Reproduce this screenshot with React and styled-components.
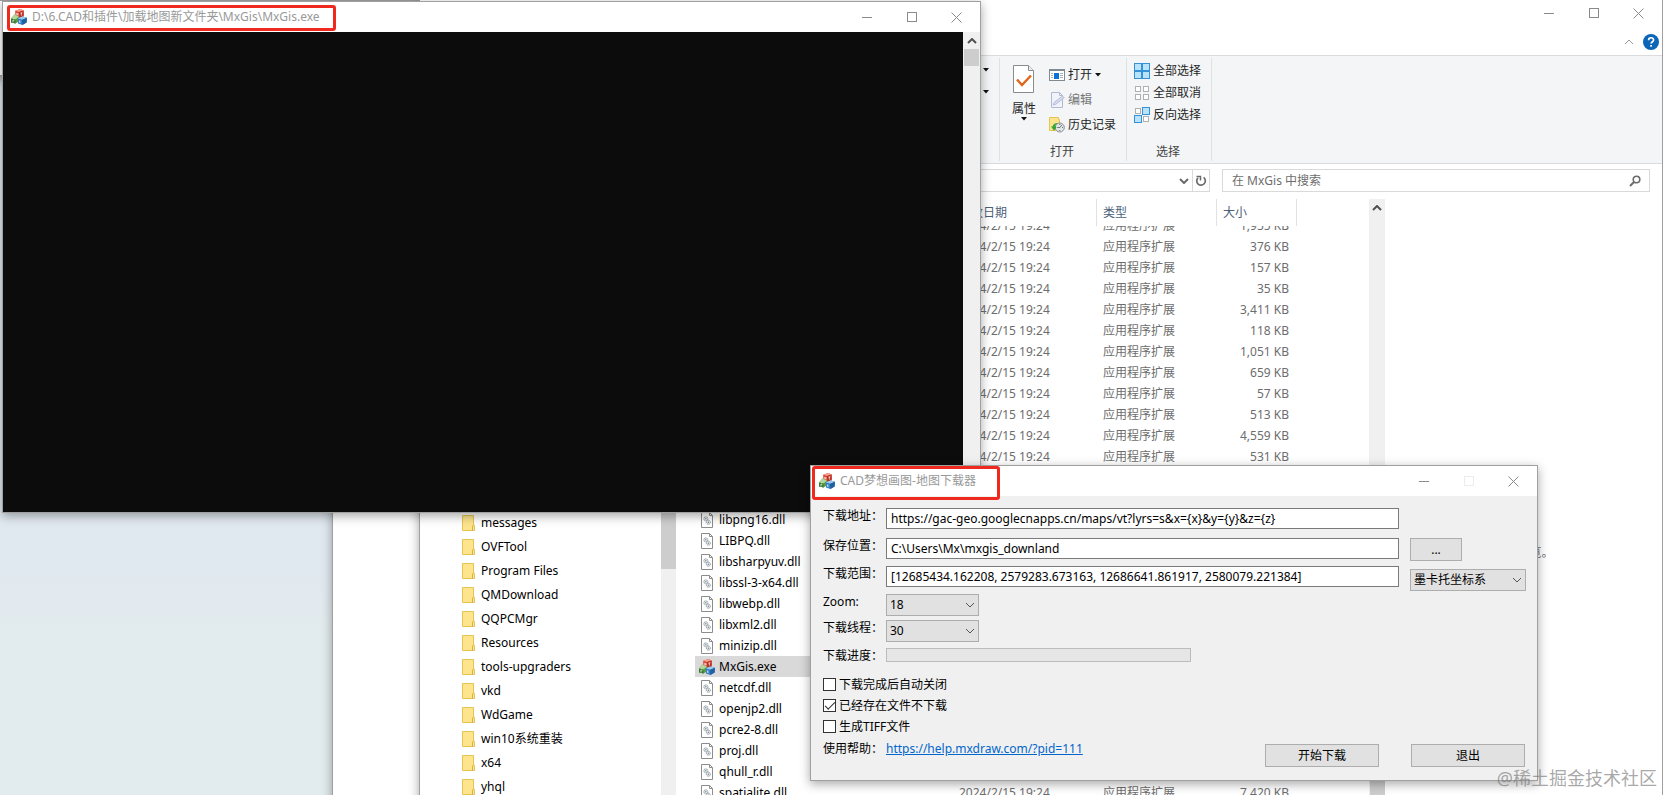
import styled, { createGlobalStyle } from 'styled-components';

const GlobalStyle = createGlobalStyle`
  * {
    box-sizing: border-box;
  }

  body {
    margin: 0;
    overflow: hidden;
  }

  body, button, input, select, table {
    font-family: 'Noto Sans', 'Noto Sans CJK SC', sans-serif;
    font-size: 12px;
    line-height: 16px;
    color: #000;
  }

  button {
    padding: 0;
    border: 0;
    background: none;
  }

  svg {
    display: block;
    flex: none;
  }
`;

const Desktop = styled.main`
  position: relative;
  width: 100vw;
  height: 100vh;
  overflow: hidden;
  background: linear-gradient(#e1e9f0 72%, #e2ebed 80%);
`;

/* windows */

const Window = styled.section`
  position: absolute;
  display: flex;
  flex-direction: column;
  background: #fff;
  border: 1px solid #a0a0a0;
  box-shadow: 0 3px 10px rgba(0, 0, 0, 0.35);
`;

const EdgeWindow = styled(Window)`
  left: -40px;
  top: 0;
  width: 372px;
  height: 76px;
`;

const BackWindow = styled(Window)`
  left: 332px;
  right: 0;
  top: 0;
  bottom: -40px;
`;

const ExplorerWindow = styled(Window)`
  left: 419px;
  right: 0;
  top: -1px;
  bottom: -112px;
`;

const ConsoleWindow = styled(Window)`
  left: 2px;
  top: 1px;
  width: 979px;
  height: 512px;
`;

const DialogWindow = styled(Window)`
  left: 810px;
  top: 465px;
  width: 728px;
`;

const TitleBar = styled.header`
  display: flex;
  align-items: center;
  justify-content: flex-end;
  height: ${({ $height }) => $height || 30}px;
  padding: 0 1px 0 8px;
  background: #fff;
`;

const TitleText = styled.h1`
  flex: 1;
  margin: 0 0 0 5px;
  font-size: 12px;
  font-weight: 400;
  color: #999;
  white-space: nowrap;
`;

const CaptionButton = styled.button`
  display: flex;
  align-items: center;
  justify-content: center;
  width: 45px;
  height: 26px;
  color: #8a8a8a;

  &:disabled {
    color: #ececec;
  }
`;

const Highlight = styled.div`
  position: absolute;
  left: ${({ $left }) => $left}px;
  top: ${({ $top }) => $top}px;
  width: ${({ $width }) => $width}px;
  height: ${({ $height }) => $height}px;
  border: 3px solid #f0291e;
  border-radius: 3px;
  pointer-events: none;
`;

/* scroll bars */

const ScrollBar = styled.div`
  display: flex;
  flex-direction: column;
  flex: none;
  align-items: center;
  width: ${({ $width }) => $width || 16}px;
  background: #f0f0f0;
`;

const ScrollArrow = styled.button`
  display: flex;
  align-items: center;
  justify-content: center;
  width: 100%;
  height: 17px;
  color: #505050;
`;

const ScrollThumb = styled.div`
  width: 15px;
  height: ${({ $height }) => $height}px;
  margin-top: ${({ $offset }) => $offset || 0}px;
  background: #cdcdcd;
`;

/* console */

const ConsoleBody = styled.div`
  display: flex;
  flex: 1;
`;

const ConsoleScreen = styled.div`
  flex: 1;
  background: #0c0c0c;
`;

/* explorer */

const TabRow = styled.div`
  display: flex;
  align-items: center;
  justify-content: flex-end;
  gap: 9px;
  height: 29px;
  padding: 3px 3px 0 0;
  color: #999;
`;

const Ribbon = styled.div`
  display: flex;
  height: 109px;
  padding: 2px 0;
  background: #f3f5f7;
  border-top: 1px solid #d9dbdd;
  border-bottom: 1px solid #d9dbdd;
`;

const RibbonGroup = styled.div`
  display: flex;
  flex-direction: column;
  justify-content: space-between;
  width: ${({ $width }) => $width}px;
  border-right: 1px solid #dfe1e3;
`;

const RibbonTools = styled.div`
  display: flex;
  gap: 11px;
  padding: ${({ $pad }) => $pad};
`;

const ToolColumn = styled.div`
  display: flex;
  flex-direction: column;
`;

const MenuArrows = styled(ToolColumn)`
  align-items: flex-end;
  gap: 18px;
  padding: 10px;
`;

const RibbonLabel = styled.div`
  height: 17px;
  padding-right: 2px;
  text-align: center;
  color: #444;
`;

const ToolButton = styled.button`
  display: flex;
  align-items: center;
  gap: 3px;
  height: ${({ $height }) => $height}px;
  color: #262626;
  white-space: nowrap;

  &:disabled {
    color: #777;
  }
`;

const TallButton = styled.button`
  display: flex;
  flex-direction: column;
  align-items: center;
  width: 24px;
  margin-right: 2px;
  padding-top: 3px;
  color: #262626;
  white-space: nowrap;

  span {
    margin-top: 8px;
  }
`;

const AddressRow = styled.div`
  display: flex;
  gap: 12px;
  padding: 5px 12px 7px 10px;
`;

const AddressBox = styled.div`
  display: flex;
  align-items: center;
  justify-content: flex-end;
  width: 780px;
  height: 23px;
  border: 1px solid #d9d9d9;
  color: #6b6b6b;

  button {
    display: flex;
    align-items: center;
    justify-content: center;
    width: 17px;
    height: 21px;
    color: inherit;
  }

  button + button {
    border-left: 1px solid #d9d9d9;
  }
`;

const SearchBox = styled.label`
  display: flex;
  flex: 1;
  align-items: center;
  height: 23px;
  padding: 0 8px 0 9px;
  border: 1px solid #d9d9d9;
  color: #6b6b6b;

  input {
    flex: 1;
    padding: 0;
    border: 0;
    outline: 0;
    background: none;
  }

  input::placeholder {
    color: #6d6d6d;
    opacity: 1;
  }
`;

const ExplorerBody = styled.div`
  display: flex;
  flex: 1;
  min-height: 0;
`;

const NavTree = styled.ul`
  width: 241px;
  margin: 0;
  padding: 312px 0 0 42px;
  list-style: none;
  overflow: hidden;
`;

const NavItem = styled.li`
  display: flex;
  align-items: center;
  gap: 6px;
  height: 24px;
  white-space: nowrap;
`;

const FileTable = styled.table`
  display: flex;
  flex-direction: column;
  width: 693px;
  padding-left: 19px;

  tr {
    display: grid;
    grid-template-columns: 258px 144px 120px 80px;
  }

  tbody {
    flex: 1;
    overflow: hidden;
  }

  tbody tr:first-child {
    margin-top: -11px;
  }
`;

const HeadCell = styled.th`
  height: 27px;
  padding: 6px 6px 5px;
  border-right: 1px solid #e2e2e2;
  font-weight: 400;
  text-align: left;
  color: #4c607a;

  &:first-child {
    border: 0;
  }
`;

const FileRow = styled.tr`
  height: 21px;
  background: ${({ $selected }) => ($selected ? '#d9d9d9' : 'none')};
`;

const NameCell = styled.td`
  display: flex;
  align-items: center;
  gap: 4px;
  padding: 0 0 0 4px;
`;

const DetailCell = styled.td`
  padding: 3px 8px 2px 6px;
  text-align: ${({ $right }) => ($right ? 'right' : 'left')};
  color: #6d6d6d;
  white-space: nowrap;
`;

const Preview = styled.div`
  display: flex;
  flex: 1;
  align-items: center;
  justify-content: center;
  color: #6d6d6d;
`;

/* download dialog */

const DialogBody = styled.form`
  padding: 12px 12px 13px;
  background: #f0f0f0;
`;

const Fields = styled.div`
  display: grid;
  grid-template-columns: 63px 1fr 115px;
  grid-template-rows: 30px 28px 28px 26px 28px 26px;
  align-items: start;
`;

const Label = styled.label`
  grid-column: 1;
  white-space: nowrap;
`;

const TextInput = styled.input`
  height: 21px;
  margin-right: 11px;
  padding: 0 4px;
  border: 1px solid #7a7a7a;
  background: #fff;
`;

const SelectBox = styled.span`
  display: grid;
  grid-template-columns: 1fr 18px;
  align-items: center;
  align-self: ${({ $align }) => $align || 'start'};
  width: ${({ $width }) => $width}px;
  color: #555;

  select {
    grid-area: 1 / 1 / 2 / 3;
    height: 22px;
    padding: 0 3px;
    appearance: none;
    border: 1px solid #adadad;
    border-radius: 0;
    background: #e1e1e1;
  }

  svg {
    grid-area: 1 / 2 / 2 / 3;
    justify-self: center;
    pointer-events: none;
  }
`;

const Progress = styled.div`
  width: 305px;
  height: 14px;
  border: 1px solid #bcbcbc;
  background: #e6e6e6;
`;

const PushButton = styled.button`
  width: ${({ $width }) => $width}px;
  height: 23px;
  border: 1px solid #adadad;
  background: #e1e1e1;
`;

const CheckLabel = styled.label`
  display: flex;
  align-items: center;
  gap: 3px;
  height: 21px;

  input {
    display: grid;
    place-items: center;
    width: 13px;
    height: 13px;
    margin: 0;
    appearance: none;
    border: 1px solid #333;
    background: #fff;
  }

  input:checked::after {
    content: '';
    width: 9px;
    height: 4px;
    margin-bottom: 3px;
    border: solid #333;
    border-width: 0 0 1px 1px;
    transform: rotate(-45deg);
  }
`;

const DialogFooter = styled.div`
  display: grid;
  grid-template-columns: 63px 1fr auto auto;
  height: 30px;
  padding-top: 4px;

  a {
    color: #0066cc;
  }

  button {
    align-self: end;
    margin-right: 32px;
  }

  button:last-child {
    margin-right: 0;
  }
`;

const Watermark = styled.div`
  position: absolute;
  right: 6px;
  bottom: 5px;
  font-size: 18px;
  line-height: 24px;
  color: rgba(110, 110, 110, 0.6);
`;

/* icons */

const MinimizeIcon = () => <svg width="10" height="10">
  <path d="M0 5.5h10" stroke="currentColor" />
</svg>;

const MaximizeIcon = () => <svg width="10" height="10">
  <rect x="0.5" y="0.5" width="9" height="9" fill="none" stroke="currentColor" />
</svg>;

const CloseIcon = () => <svg width="11" height="11">
  <path d="M0.5 0.5l10 10M10.5 0.5l-10 10" stroke="currentColor" />
</svg>;

const Chevron = ({ up, weight = 1 }) => <svg width="10" height="6" viewBox="0 0 10 6">
  <path d={ up ? 'M1 5l4-4 4 4' : 'M1 1l4 4 4-4' } fill="none" stroke="currentColor" strokeWidth={ weight } />
</svg>;

const DownTriangle = () => <svg width="6" height="4">
  <path d="M0 0h6L3 3.5z" fill="#111" />
</svg>;

const CubesIcon = () => <svg width="16" height="16" viewBox="0 0 16 16">
  <path d="M4.2 1.8L9.4 0l3.2 1.6v5.6L8.2 8.8 4.4 7z" fill="#d8402c" />
  <path d="M4.2 1.8L9.4 0l3.2 1.6L8 3z" fill="#f4a08e" />
  <path d="M8 3l4.6-1.4v5.6L8.2 8.8z" fill="#bb2f20" />
  <path d="M0 9.4L3.4 5.6l4.4 1.8-.6 5.4L4.6 14.6 0 13.4z" fill="#5a9e48" />
  <path d="M0 9.4L3.4 5.6l4.4 1.8-3.4 3z" fill="#b3d59c" />
  <path d="M0 9.4l4.4 1 .2 4.2-4.6-1.2z" fill="#3a7a30" />
  <path d="M6.8 9.2l4.6-1.8L16 8.8l-.4 4.8L11.4 16l-4.4-1.6z" fill="#2f7cc4" />
  <path d="M6.8 9.2l4.6-1.8L16 8.8l-4.8 1.9z" fill="#9acbef" />
  <path d="M11.2 10.7L16 8.8l-.4 4.8L11.4 16z" fill="#2060a0" />
  <path d="M5.8 3.8v2.4M7 4.2v2.4M5.8 5l1.2.4M9.4 4.2l2-.7M10.4 4v2.6M2 11v2.4M2 11l1.3.3M9.6 12.2l-1.2-.4v1.6l1.2.4" fill="none" stroke="#fff" strokeWidth="0.7" />
</svg>;

const FolderIcon = () => <svg width="13" height="16" viewBox="0 0 13 16">
  <path d="M0.5 0.5h11v10h1v5h-12z" fill="#fde48d" stroke="#e5c453" />
  <path d="M10.5 15.5v-4.6l1-.9" fill="none" stroke="#d9b23c" />
</svg>;

const DllIcon = () => <svg width="16" height="16" viewBox="0 0 16 16">
  <path d="M2.5 0.5h8l3 3v12h-11z" fill="#fff" stroke="#8c8c8c" />
  <path d="M10.5 0.5v3h3" fill="none" stroke="#8c8c8c" />
  <circle cx="6.8" cy="6.8" r="2" fill="#e6ebee" stroke="#8d989e" strokeDasharray="1.2 .4" />
  <circle cx="6.8" cy="6.8" r="0.7" fill="#7e8a90" />
  <circle cx="9.4" cy="10.2" r="2" fill="#e6ebee" stroke="#8d989e" strokeDasharray="1.2 .4" />
  <circle cx="9.4" cy="10.2" r="0.7" fill="#7e8a90" />
</svg>;

const PropertiesIcon = () => <svg width="22" height="28" viewBox="0 0 22 28">
  <path d="M0.5 0.5h15l5 5v22h-20z" fill="#fff" stroke="#8b8b8b" />
  <path d="M15.5 0.5v5h5" fill="#eee" stroke="#8b8b8b" />
  <path d="M4 14.5l5 5.5 9-9.5" fill="none" stroke="#e0661b" strokeWidth="2.4" />
</svg>;

const OpenIcon = () => <svg width="16" height="12" viewBox="0 0 16 12">
  <rect x="0.5" y="0.5" width="15" height="11" fill="#fff" stroke="#808a92" />
  <path d="M1 1.5h14" stroke="#808a92" />
  <path d="M2 4.5h2M2 6.5h2M2 8.5h2M11 4.5h3M11 6.5h3M11 8.5h3" stroke="#a8b0b6" />
  <rect x="5" y="4" width="5" height="6" fill="#0a72d2" />
</svg>;

const EditIcon = () => <svg width="16" height="16" viewBox="0 0 16 16">
  <path d="M2.5 0.5h8l3 3v12h-11z" fill="#f1f3fa" stroke="#b3b9d2" />
  <path d="M10.5 0.5v3h3" fill="none" stroke="#b3b9d2" />
  <path d="M4 13l1-2.5L13.5 4l1.8 1.8L6.5 12.5z" fill="#d3d9ee" stroke="#a7afce" strokeWidth="0.7" />
</svg>;

const HistoryIcon = () => <svg width="16" height="16" viewBox="0 0 16 16">
  <path d="M0.5 0.5h9v2h1v11h-10z" fill="#fde48d" stroke="#e5c453" />
  <circle cx="10.8" cy="10.5" r="4.5" fill="#e4e7e9" stroke="#858b90" />
  <path d="M10.8 10.5l2-2.5M10.8 10.5h-2.5M10.8 7v1M14 10.5h-1M10.8 14v-1" stroke="#555" strokeWidth="0.8" />
  <path d="M2 9.6l3 4.2 2.6-3.8-1.5-.2c.2-2 1.4-3.2 3.3-3.7-3-.5-5.3.9-5.8 3.5z" fill="#2faa36" />
</svg>;

const SquaresIcon = ({ on }) => <svg width="16" height="16" viewBox="0 0 16 16">
  {
    [[0, 0], [8, 0], [0, 8], [8, 8]].map(([x, y], _index) => on[_index]
      ? <rect key={ _index } x={ x + 0.5 } y={ y + 0.5 } width="7" height="7" fill="#b9e3fb" stroke="#3592d6" />
      : <rect key={ _index } x={ x + 1.5 } y={ y + 1.5 } width="5" height="5" fill="#fff" stroke="#b0b0b0" />)
  }
</svg>;

const RefreshIcon = () => <svg width="12" height="12" viewBox="0 0 12 12">
  <path d="M3 2.8A4.3 4.3 0 1 0 8.6 2.4" fill="none" stroke="currentColor" strokeWidth="1.7" />
  <path d="M1.5 1.5h4v4" fill="none" stroke="currentColor" strokeWidth="1.5" />
</svg>;

const SearchIcon = () => <svg width="12" height="12" viewBox="0 0 12 12">
  <circle cx="7.5" cy="4.5" r="3.3" fill="none" stroke="currentColor" strokeWidth="1.6" />
  <path d="M5 7L1 11" stroke="currentColor" strokeWidth="2" />
</svg>;

const HelpIcon = () => <svg width="16" height="16" viewBox="0 0 16 16">
  <circle cx="8" cy="8" r="8" fill="#0b66b8" />
  <path d="M5.6 6.2C5.6 3 10.6 3 10.6 6c0 1.7-2.5 1.7-2.5 3.6M8.1 11v1.8" fill="none" stroke="#fff" strokeWidth="1.7" />
</svg>;

const folders = [
  'messages', 'OVFTool', 'Program Files', 'QMDownload', 'QQPCMgr', 'Resources',
  'tools-upgraders', 'vkd', 'WdGame', 'win10系统重装', 'x64', 'yhql',
];

const sizes = [
  '1,955 KB', '376 KB', '157 KB', '35 KB', '3,411 KB', '118 KB', '1,051 KB',
  '659 KB', '57 KB', '513 KB', '4,559 KB', '531 KB',
];

const names = [
  'libpng16.dll', 'LIBPQ.dll', 'libsharpyuv.dll', 'libssl-3-x64.dll', 'libwebp.dll',
  'libxml2.dll', 'minizip.dll', 'MxGis.exe', 'netcdf.dll', 'openjp2.dll',
  'pcre2-8.dll', 'proj.dll', 'qhull_r.dll',
];

// two rows lie between the last size and the first name
const files = [
  ...sizes.map(size => ({ size })),
  {},
  {},
  ...names.map(name => ({ name })),
  { name: 'spatialite.dll', size: '7,420 KB' },
];

const Caption = ({ fixed }) => <>
  <CaptionButton aria-label="最小化"><MinimizeIcon /></CaptionButton>
  <CaptionButton aria-label="最大化" disabled={ fixed }><MaximizeIcon /></CaptionButton>
  <CaptionButton aria-label="关闭"><CloseIcon /></CaptionButton>
</>;

const Select = ({ id, value, width, align, label }) => <SelectBox $width={ width } $align={ align }>
  <select id={ id } aria-label={ label } defaultValue={ value }>
    <option>{ value }</option>
  </select>
  <Chevron />
</SelectBox>;

const Explorer = () => <ExplorerWindow>
  <TitleBar $height={ 26 }>
    <Caption />
  </TitleBar>
  <TabRow>
    <Chevron up />
    <HelpIcon />
  </TabRow>
  <Ribbon>
    <RibbonGroup $width={ 580 }>
      <MenuArrows>
        <DownTriangle />
        <DownTriangle />
      </MenuArrows>
    </RibbonGroup>
    <RibbonGroup $width={ 127 }>
      <RibbonTools $pad="4px 0 0 12px">
        <TallButton>
          <PropertiesIcon />
          <span>属性</span>
          <DownTriangle />
        </TallButton>
        <ToolColumn>
          <ToolButton $height={ 25 }><OpenIcon />打开<DownTriangle /></ToolButton>
          <ToolButton $height={ 25 } disabled><EditIcon />编辑</ToolButton>
          <ToolButton $height={ 25 }><HistoryIcon />历史记录</ToolButton>
        </ToolColumn>
      </RibbonTools>
      <RibbonLabel>打开</RibbonLabel>
    </RibbonGroup>
    <RibbonGroup $width={ 85 }>
      <RibbonTools $pad="2px 0 0 7px">
        <ToolColumn>
          <ToolButton $height={ 22 }><SquaresIcon on={ [1, 1, 1, 1] } />全部选择</ToolButton>
          <ToolButton $height={ 22 }><SquaresIcon on={ [0, 0, 0, 0] } />全部取消</ToolButton>
          <ToolButton $height={ 22 }><SquaresIcon on={ [0, 1, 1, 0] } />反向选择</ToolButton>
        </ToolColumn>
      </RibbonTools>
      <RibbonLabel>选择</RibbonLabel>
    </RibbonGroup>
  </Ribbon>
  <AddressRow>
    <AddressBox>
      <button aria-label="历史位置"><Chevron weight={ 2 } /></button>
      <button aria-label="刷新"><RefreshIcon /></button>
    </AddressBox>
    <SearchBox>
      <input aria-label="搜索" placeholder="在 MxGis 中搜索" />
      <SearchIcon />
    </SearchBox>
  </AddressRow>
  <ExplorerBody>
    <NavTree>
      {
        folders.map(name => <NavItem key={ name }><FolderIcon />{ name }</NavItem>)
      }
    </NavTree>
    <ScrollBar $width={ 15 }>
      <ScrollThumb $height={ 352 } $offset={ 18 } />
    </ScrollBar>
    <FileTable>
      <thead>
        <tr>
          <HeadCell />
          <HeadCell>修改日期</HeadCell>
          <HeadCell>类型</HeadCell>
          <HeadCell>大小</HeadCell>
        </tr>
      </thead>
      <tbody>
        {
          files.map(({ name, size }, _index) => <FileRow key={ _index } $selected={ name === 'MxGis.exe' }>
            <NameCell>
              { name && (name.endsWith('.exe') ? <CubesIcon /> : <DllIcon />) }
              { name }
            </NameCell>
            <DetailCell>{ size && '2024/2/15 19:24' }</DetailCell>
            <DetailCell>{ size && '应用程序扩展' }</DetailCell>
            <DetailCell $right>{ size }</DetailCell>
          </FileRow>)
        }
      </tbody>
    </FileTable>
    <ScrollBar>
      <ScrollArrow aria-label="向上滚动"><Chevron up weight={ 2 } /></ScrollArrow>
      <ScrollThumb $height={ 200 } $offset={ 400 } />
    </ScrollBar>
    <Preview>没有预览。</Preview>
  </ExplorerBody>
</ExplorerWindow>;

const Console = () => <ConsoleWindow>
  <TitleBar>
    <CubesIcon />
    <TitleText>D:\6.CAD和插件\加载地图新文件夹\MxGis\MxGis.exe</TitleText>
    <Caption />
  </TitleBar>
  <ConsoleBody>
    <ConsoleScreen />
    <ScrollBar $width={ 17 }>
      <ScrollArrow aria-label="向上滚动"><Chevron up weight={ 2 } /></ScrollArrow>
      <ScrollThumb $height={ 17 } />
    </ScrollBar>
  </ConsoleBody>
  <Highlight $left={ 4 } $top={ 3 } $width={ 329 } $height={ 26 } />
</ConsoleWindow>;

const Downloader = () => <DialogWindow>
  <TitleBar>
    <CubesIcon />
    <TitleText>CAD梦想画图-地图下载器</TitleText>
    <Caption fixed />
  </TitleBar>
  <DialogBody onSubmit={ e => e.preventDefault() }>
    <Fields>
      <Label htmlFor="url">下载地址：</Label>
      <TextInput id="url" defaultValue="https://gac-geo.googlecnapps.cn/maps/vt?lyrs=s&x={x}&y={y}&z={z}" />
      <Label htmlFor="folder">保存位置：</Label>
      <TextInput id="folder" defaultValue="C:\Users\Mx\mxgis_downland" />
      <PushButton type="button" $width={ 52 }>...</PushButton>
      <Label htmlFor="range">下载范围：</Label>
      <TextInput id="range" defaultValue="[12685434.162208, 2579283.673163, 12686641.861917, 2580079.221384]" />
      <Select label="坐标系" value="墨卡托坐标系" width={ 116 } align="center" />
      <Label htmlFor="zoom">Zoom:</Label>
      <Select id="zoom" value="18" width={ 93 } />
      <Label htmlFor="threads">下载线程：</Label>
      <Select id="threads" value="30" width={ 93 } />
      <Label as="span" id="progress">下载进度：</Label>
      <Progress role="progressbar" aria-labelledby="progress" aria-valuenow={ 0 } />
    </Fields>
    <CheckLabel><input type="checkbox" />下载完成后自动关闭</CheckLabel>
    <CheckLabel><input type="checkbox" defaultChecked />已经存在文件不下载</CheckLabel>
    <CheckLabel><input type="checkbox" />生成TIFF文件</CheckLabel>
    <DialogFooter>
      <span>使用帮助：</span>
      <span><a href="https://help.mxdraw.com/?pid=111">https://help.mxdraw.com/?pid=111</a></span>
      <PushButton type="submit" $width={ 114 }>开始下载</PushButton>
      <PushButton type="button" $width={ 114 }>退出</PushButton>
    </DialogFooter>
  </DialogBody>
  <Highlight $left={ 1 } $top={ 0 } $width={ 188 } $height={ 34 } />
</DialogWindow>;

export default () => {
  return <Desktop>
    <GlobalStyle />
    <EdgeWindow />
    <BackWindow />
    <Explorer />
    <Console />
    <Downloader />
    <Watermark>@稀土掘金技术社区</Watermark>
  </Desktop>
}
